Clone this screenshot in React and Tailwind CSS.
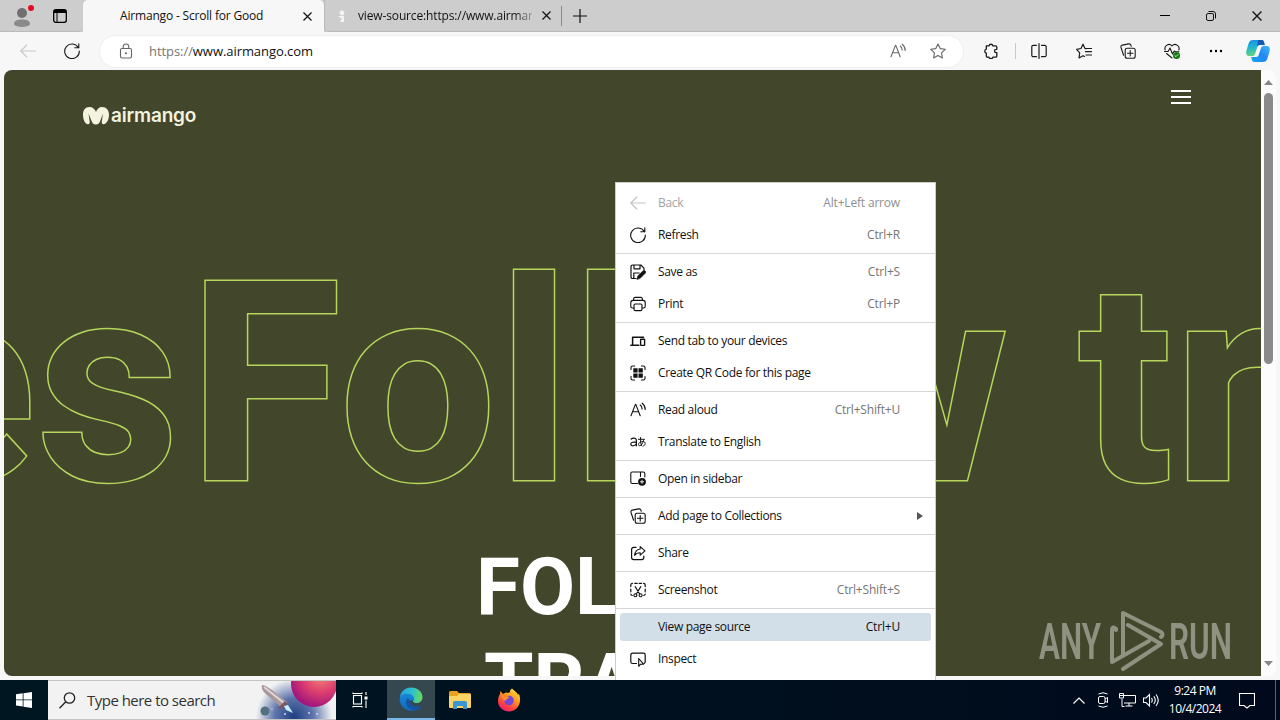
import React from 'react'
import clsx from 'clsx'

const Icon = ({ size = 16, box = '0 0 16 16', className, children }) => (
    <svg width={size} height={size} viewBox={box} fill="none" stroke="currentColor" strokeWidth="1.1" strokeLinecap="round" strokeLinejoin="round" className={clsx('shrink-0', className)}>
        {children}
    </svg>
)

const BackIcon = () => <Icon><path d="M15.5 8H.8M6.8 2 .8 8l6 6" /></Icon>

const RefreshIcon = ({ className }) => (
    <Icon className={className}><path d="M14.4 4.800A7.300 7.300 0 1 0 15.300 8M14.800.8v4h-4" /></Icon>
)

const SaveIcon = () => (
    <Icon>
        <path d="M6 14.5H2.6A1.6 1.6 0 0 1 1 12.9V2.6A1.6 1.6 0 0 1 2.6 1h8.2L14 4.2v2M4 1v3.8h6V1M3.8 14.4V9h5.4" strokeWidth="1.2" />
        <path d="m7 15.2.8-3.2 5-5a1.6 1.6 0 0 1 2.4 2.3l-5 5z" fill="currentColor" strokeWidth=".6" />
    </Icon>
)

const PrintIcon = () => (
    <Icon>
        <path d="M4 12H2.4A1.6 1.6 0 0 1 .8 10.4V6.6A2.2 2.2 0 0 1 3 4.4h10a2.2 2.2 0 0 1 2.2 2.2v3.8a1.6 1.6 0 0 1-1.6 1.6H12M3.6 4.400V3A1.600 1.600 0 0 1 5.200 1.400h5.600A1.600 1.600 0 0 1 12.400 3v1.400" />
        <rect x="4" y="8" width="8" height="6.6" rx="1.3" />
    </Icon>
)

const DevicesIcon = () => (
    <Icon>
        <path d="M2.600 11V4.200h11M.8 12.200h8" strokeWidth="1.500" />
        <rect x="10.600" y="6.200" width="4" height="6.200" rx=".6" strokeWidth="1.400" />
    </Icon>
)

const QrIcon = () => (
    <Icon>
        <path d="M1 4.500V2.600A1.600 1.600 0 0 1 2.600 1h2M11.400 1h2A1.600 1.600 0 0 1 15 2.600v2M15 11.500v1.900a1.600 1.600 0 0 1-1.600 1.600h-2M4.600 15h-2A1.600 1.600 0 0 1 1 13.400v-2" />
        <path d="M3.300 3.300h4.300v4.300H3.300zM8.500 3.300h4.300v4.300H8.500zM3.300 8.500h4.300v4.300H3.300zM8.500 8.500h4.300v4.300H8.500z" fill="currentColor" stroke="none" />
    </Icon>
)

const ReadAloudIcon = ({ className }) => (
    <Icon className={className}>
        <path d="m1 13.800 4.400-11.400h.4l4.400 11.400M2.700 9.800h5.800M10.200 3a5 5 0 0 1 1.900 4M12.200 1.200a7.600 7.600 0 0 1 3 6.300" />
    </Icon>
)

const TranslateIcon = () => (
    <Icon>
        <path d="M1.200 5c1.600-1.400 5.200-1.400 5.200 1.400v5.400M6.400 7.800C3.400 7.800.8 8.200.8 10.200c0 2.400 4.600 2 5.600-.6" strokeWidth="1.200" />
        <path d="M8.400 5.300h6.100M10.600 3.500c-.2 3 0 6 .9 8M13.500 6.500c-.8 3-2.200 5.200-3.900 5.200-2.200 0-1-4.200 3-4.200 3.600 0 3.400 4 .4 4.600" strokeWidth="1" />
    </Icon>
)

const SidebarIcon = () => (
    <Icon>
        <path d="M7.500 12.500H2.200A1.400 1.400 0 0 1 .8 11.100V2.400A1.400 1.400 0 0 1 2.200 1h11.200a1.400 1.400 0 0 1 1.400 1.400V6M10.500 1v4.500" />
        <circle cx="12" cy="10.800" r="3.900" fill="currentColor" stroke="none" />
        <path d="M12 9.200v3.200M10.400 10.800h3.200" stroke="#fff" strokeWidth=".9" />
    </Icon>
)

const CollectionsIcon = ({ className }) => (
    <Icon className={className}>
        <rect x="5.200" y="5.200" width="10" height="10" rx="2" />
        <path d="M10.200 7.500v5.400M7.500 10.200h5.400M3.600 12.200 1 4.500a2 2 0 0 1 1.300-2.400L8.700.9a2 2 0 0 1 2.300 1.400l.3 1" />
    </Icon>
)

const ShareIcon = () => (
    <Icon>
        <path d="M6 2.400H3.600a2 2 0 0 0-2 2v8.200a2 2 0 0 0 2 2h8.200a2 2 0 0 0 2-2V11" strokeWidth="1.200" />
        <path d="M10.200 1.600 15 5.900l-4.800 4.300V7.800c-2.400 0-4.200.6-5.600 2.600.4-3.400 2.200-6 5.600-6.400z" />
    </Icon>
)

const ScreenshotIcon = () => (
    <Icon>
        <path d="M2.200 13.500C1.300 13.300.8 12.800.8 12M.8 9.800V7M.8 4.600V3A1.600 1.600 0 0 1 2.400 1.400M4.800 1.400h2.400M9.200 1.400h2.300M13.600 1.400A1.600 1.600 0 0 1 15.200 3v1.600M15.200 7v2.800M15.200 12c0 .8-.5 1.300-1.400 1.500" strokeWidth="1.200" />
        <path d="m5.200 4.600 4.500 7.400M10.800 4.600 6.300 12" />
        <circle cx="5.400" cy="13.200" r="1.500" />
        <circle cx="10.600" cy="13.200" r="1.500" />
    </Icon>
)

const InspectIcon = () => (
    <Icon>
        <path d="M6.500 12.500H2.600A1.800 1.800 0 0 1 .8 10.700V4a1.800 1.800 0 0 1 1.800-1.800h10.800A1.800 1.800 0 0 1 15.200 4v6.700c0 .8-.5 1.500-1.200 1.700" strokeWidth="1.200" />
        <path d="M8.700 7.500v7.800l1.900-2.100h2.900z" />
    </Icon>
)

const menuGroups = [
    [
        { label: 'Back', keys: 'Alt+Left arrow', icon: BackIcon, disabled: true },
        { label: 'Refresh', keys: 'Ctrl+R', icon: RefreshIcon },
    ],
    [
        { label: 'Save as', keys: 'Ctrl+S', icon: SaveIcon },
        { label: 'Print', keys: 'Ctrl+P', icon: PrintIcon },
    ],
    [
        { label: 'Send tab to your devices', icon: DevicesIcon },
        { label: 'Create QR Code for this page', icon: QrIcon },
    ],
    [
        { label: 'Read aloud', keys: 'Ctrl+Shift+U', icon: ReadAloudIcon },
        { label: 'Translate to English', icon: TranslateIcon },
    ],
    [{ label: 'Open in sidebar', icon: SidebarIcon }],
    [{ label: 'Add page to Collections', icon: CollectionsIcon, submenu: true }],
    [{ label: 'Share', icon: ShareIcon }],
    [{ label: 'Screenshot', keys: 'Ctrl+Shift+S', icon: ScreenshotIcon }],
    [
        { label: 'View page source', keys: 'Ctrl+U', active: true },
        { label: 'Inspect', icon: InspectIcon },
    ],
]

const MenuItem = ({ label, keys, icon: Glyph, disabled, active, submenu }) => (
    <div className={clsx('mx-1 my-0.5 flex h-7 shrink-0 items-center rounded-[3px] pl-2.5 text-[12px]', active && 'bg-[#d3dfe8]', disabled ? 'text-[#a3a3a3]' : 'text-[#111]')}>
        <div className={clsx('mr-3 flex w-4 justify-center', disabled && 'text-[#c4c4c4]')}>{Glyph && <Glyph />}</div>
        <span className="tracking-[-0.33px]">{label}</span>
        {keys && <span className={clsx('ml-auto mr-[31px] tracking-[-0.18px]', disabled ? 'text-[#8f8f8f]' : active ? 'text-[#111]' : 'text-[#757575]')}>{keys}</span>}
        {submenu && <svg width="6" height="8" viewBox="0 0 6 8" className="ml-auto mr-2 fill-[#555]"><path d="M0 0 6 4 0 8z" /></svg>}
    </div>
)

const ContextMenu = () => (
    <div className="absolute left-[615px] top-[182px] flex h-[498px] w-[321px] flex-col overflow-hidden border border-b-0 border-[#ccc] bg-white pt-1">
        {menuGroups.map((group, i) => (
            <div key={i} className={clsx('flex shrink-0 flex-col', i > 0 && 'mt-0.5 border-t border-[#d6d6d6] pt-0.5')}>
                {group.map((item) => <MenuItem key={item.label} {...item} />)}
            </div>
        ))}
    </div>
)

const CloseIcon = ({ className }) => (
    <svg width="9" height="9" viewBox="0 0 9 9" stroke="#111" strokeWidth="1.200" className={className}><path d="m.5.5 8 8M8.500.5l-8 8" /></svg>
)

const TabStrip = () => (
    <div className="flex h-8 items-center bg-[#cdcdcd] text-[12px] text-[#111]">
        <div className="flex h-8 w-[83px] items-center rounded-br-[5px] border-b border-[#bbb]">
            <svg width="26" height="26" viewBox="0 0 26 26" className="ml-[11px]">
                <circle cx="11" cy="10" r="5" fill="#707070" />
                <path d="M3 21.500C3 17 7 16.500 11 16.500s8 .5 8 5c-2 3.200-14 3.200-16 0z" fill="#8a8a8a" />
                <circle cx="20" cy="5" r="3" fill="#e00b1c" />
            </svg>
            <svg width="14" height="14" viewBox="0 0 14 14" fill="none" stroke="#000" className="ml-4">
                <rect x=".7" y=".7" width="12.600" height="12.600" rx="2" strokeWidth="1.300" />
                <path d="M1 2.500h12" strokeWidth="3" />
                <path d="M4 3v10" />
            </svg>
        </div>
        <div className="flex h-8 w-[241px] items-center rounded-t-[5px] bg-[#f7f7f7]">
            <span className="ml-[37px] whitespace-nowrap tracking-[-0.18px]">Airmango - Scroll for Good</span>
            <CloseIcon className="ml-auto mr-3" />
        </div>
        <div className="flex h-8 flex-1 items-center rounded-bl-[5px] border-b border-l border-[#b9b9b9]">
            <svg width="8" height="12" viewBox="0 0 8 12" fill="#f4f4f4" className="ml-3"><circle cx="5" cy="3" r="2.400" /><path d="M1 6h6v4a2 2 0 0 1-4 1L5 9z" /></svg>
            <div className="ml-[13px] w-[174px] whitespace-nowrap bg-gradient-to-r from-[#111] from-90% to-[#11111144] bg-clip-text tracking-[-0.14px] text-transparent">view-source:https://www.airman</div>
            <CloseIcon className="ml-[10px]" />
            <div className="ml-[10px] h-5 w-px bg-[#888]" />
            <svg width="14" height="14" viewBox="0 0 14 14" stroke="#111" strokeWidth="1.200" className="ml-[11px]"><path d="M7 0v14M0 7h14" /></svg>
            <div className="ml-auto flex items-center pr-[18px]">
                <div className="h-px w-[10px] bg-black" />
                <svg width="10" height="10" viewBox="0 0 10 10" fill="none" stroke="#111" className="ml-[36px]"><rect x=".5" y="2.500" width="7" height="7" rx="1.500" /><path d="M2.500.5H7a2.500 2.500 0 0 1 2.500 2.500v4.500" /></svg>
                <CloseIcon className="ml-[36px] h-[10px] w-[10px]" />
            </div>
        </div>
    </div>
)

const Toolbar = () => (
    <div className="flex h-[38px] items-center bg-[#f7f7f7] text-[#1b1b1b]">
        <div className="ml-5 text-[#c9c9c9]"><BackIcon /></div>
        <RefreshIcon className="ml-7" />
        <div className="ml-5 flex h-[31px] w-[863px] items-center rounded-full bg-white text-[#666] shadow-[0_0_2px_#ddd]">
            <Icon className="ml-[18px]">
                <path d="M5.200 5.500V3.800a2.800 2.800 0 0 1 5.600 0v1.700" />
                <rect x="2.500" y="5.500" width="11" height="9.500" rx="1.500" />
                <circle cx="8" cy="10.200" r=".5" fill="currentColor" />
            </Icon>
            <span className="ml-[15px] pt-px text-[13px] tracking-[-0.06px] text-[#767676]">https://<span className="text-[#111]">www.airmango.com</span></span>
            <div className="ml-auto mr-[17px] flex gap-6">
                <ReadAloudIcon />
                <Icon><path d="m8 .9 2.200 4.700 5 .7-3.700 3.600.9 5.100L8 12.600 3.600 15l.9-5.100L.8 6.300l5-.7z" /></Icon>
            </div>
        </div>
        <Icon className="ml-5">
            <path d="M3.300 2.800h2.700a2 2 0 0 1 3.900 0h2.700a1.200 1.200 0 0 1 1.200 1.200v2.300h-.6a1.700 1.700 0 0 0 0 3.400h.6V13a1.200 1.200 0 0 1-1.200 1.200H9.900a2 2 0 0 1-3.900 0H4.500A1.200 1.200 0 0 1 3.300 13v-2.900a2 2 0 0 1 0-3.900z" strokeWidth="1.300" />
        </Icon>
        <div className="ml-4 h-4 w-px bg-[#c8c8c8]" />
        <Icon className="ml-[15px]"><path d="M5.500 2.300H2.300A1.500 1.500 0 0 0 .8 3.800v8.400a1.500 1.500 0 0 0 1.500 1.500h3.200M10.500 2.300h3.200a1.500 1.500 0 0 1 1.500 1.500v8.400a1.500 1.500 0 0 1-1.500 1.500h-3.200M8 .6v14.800" strokeWidth="1.200" /></Icon>
        <Icon className="ml-[29px]"><path d="M10.500 5.600H9L7 1.200 5 5.500l-4.400.8L3.700 9.800 3 15l4-2.300 1.500.8M10 5.500h5.500M9.500 8.700h6M10 12h5.500" strokeWidth="1.200" /></Icon>
        <CollectionsIcon className="ml-7" />
        <Icon className="ml-7">
            <path d="M1.200 7A4 4 0 0 1 8 3a4 4 0 0 1 6.800 4M.5 8.500H4L6 5l2.500 6 1.700-3 1 .7H15M2.500 10.500 8 15" />
            <circle cx="12.500" cy="12.500" r="3.500" fill="#107c10" stroke="none" />
            <path d="m11 12.700 1 .9 2-2" stroke="#fff" strokeWidth=".8" />
        </Icon>
        <svg width="14" height="4" viewBox="0 0 14 4" className="ml-[29px] fill-black"><circle cx="2" cy="2" r="1.200" /><circle cx="7" cy="2" r="1.200" /><circle cx="12" cy="2" r="1.200" /></svg>
        <svg width="24" height="24" viewBox="0 0 24 24" className="ml-[23px] shrink-0">
            <defs>
                <linearGradient id="cpA" x1="0" y1="0" x2="0.2" y2="1"><stop stopColor="#188be8" /><stop offset=".5" stopColor="#20b5d0" /><stop offset="1" stopColor="#63d47d" /></linearGradient>
                <linearGradient id="cpB" x1="1" y1="0" x2="0" y2="1"><stop stopColor="#40b8fa" /><stop offset=".5" stopColor="#2386f5" /><stop offset="1" stopColor="#14a6e6" /></linearGradient>
            </defs>
            <path d="M7 1h8c3 0 3 2 3.800 5H14c-2 0-2.500 1-3 3l-2 6c-.5 1.500-1.500 2-3 2H3c-3 0-3.300-3-2.400-6l2-6.500C3.400 2 4.500 1 7 1z" fill="url(#cpA)" />
            <path d="M12 1h3c3 0 3 2 3.800 5H14c-1.500 0-2.300.6-2.800 2z" fill="#1459b8" />
            <path d="M17 23H9c-3 0-3-2-3.800-5H10c2 0 2.500-1 3-3l2-6c.5-1.500 1.500-2 3-2h3c3 0 3.300 3 2.400 6l-2 6.500C20.600 22 19.500 23 17 23z" fill="url(#cpB)" />
        </svg>
    </div>
)

const Watermark = () => (
    <svg width="194" height="64" viewBox="0 0 194 64" className="absolute left-[1038px] top-[609px] opacity-55" fill="#d0d0c8">
        <text x="1" y="50" fontFamily="Roboto" fontSize="50" fontWeight="600" textLength="62" lengthAdjust="spacingAndGlyphs">ANY</text>
        <text x="131" y="50" fontFamily="Roboto" fontSize="50" fontWeight="600" textLength="63" lengthAdjust="spacingAndGlyphs">RUN</text>
        <path d="M78 20q-5-1-4-8V9M85 48V4l39 20q2 2-1 4M88 16l34 18-48 27V24q0-4 4-4M85 60l39-24" fill="none" stroke="none" />
        <g fill="none" stroke="#d0d0c8" strokeWidth="4" strokeLinejoin="round" strokeLinecap="round">
            <path d="M78 21v-1q-4-4-4 2M85 45V4l38 19q3 3 0 5M90 16l33 19-38 25M78 20q-4-2-4 3v30l37-21" />
        </g>
    </svg>
)

const WebPage = () => (
    <div className="flex h-[606px] w-[1257px] flex-col overflow-hidden rounded-l-[8px] bg-[#42472c]">
        <header className="flex h-[164px] shrink-0 items-start justify-between pl-[79px] pr-[70px]">
            <div className="mt-[34px] flex items-center text-[#f4f3df]">
                <svg width="26" height="18" viewBox="0 0 26 18" fill="currentColor">
                    <path d="M6.500 0C2 0 0 3.500 0 7.500 0 12 1.500 16 4 17c2 .8 3-.5 2.700-2.500L5.500 6.500 9 15c1 2.300 2.300 2.500 4.200 2.500 2 0 3-1 3.800-3L20 6.500l-1.200 8c-.3 2 .7 3.300 2.700 2.500 2.800-1 4.500-5 4.500-9.500C26 3.500 23.500 0 19 0c-3 0-5 2-6 5-1-3-3.500-5-6.500-5z" />
                </svg>
                <span className="ml-[2px] font-['Inter'] text-[19px] font-semibold leading-6 tracking-[-0.2px]">airmango</span>
            </div>
            <div className="mt-5 flex w-5 flex-col gap-1">
                <div className="h-0.5 bg-white" />
                <div className="h-0.5 bg-white" />
                <div className="h-0.5 bg-white" />
            </div>
        </header>
        {/* the fill is painted over the stroke so the glyph contours stay clean where they overlap */}
        <div className="-ml-[119px] flex h-[300px] shrink-0 whitespace-pre font-['Roboto'] text-[280px] font-bold leading-[300px] text-[#42472c] [-webkit-text-stroke:3px_#b5d65b] [paint-order:stroke_fill]">
            <span>es</span>
            <span className="ml-[8px]">Follow tr</span>
        </div>
        <h1 className="shrink-0 pl-[472px] pt-[5px] font-['Roboto'] text-[80px] font-bold leading-[96px] text-white">
            <div>FOLLOW</div>
            <div className="pl-[8px]">TRAVELS</div>
        </h1>
    </div>
)

const Scrollbar = () => (
    <div className="flex h-[606px] w-[15px] flex-col items-center rounded-r-[8px] bg-[#fcfcfc] py-[10px]">
        <svg width="9" height="5" viewBox="0 0 9 5" fill="#858585"><path d="M4.500 0 9 5H0z" /></svg>
        <div className="mt-2 h-[271px] w-[9px] rounded-full bg-[#8a8a8a]" />
        <svg width="9" height="5" viewBox="0 0 9 5" fill="#858585" className="mt-auto"><path d="M4.500 5 9 0H0z" /></svg>
    </div>
)

const SearchArt = () => (
    <svg width="80" height="38" viewBox="-4 0 80 38">
        <defs>
            <radialGradient id="haze" gradientUnits="userSpaceOnUse" cx="34" cy="36" r="38"><stop stopColor="#1f3f82" /><stop offset=".5" stopColor="#5d74aa" /><stop offset="1" stopColor="#f2f2f2" /></radialGradient>
            <radialGradient id="planet" cx=".65" cy=".3" r=".7"><stop stopColor="#f58a78" /><stop offset=".55" stopColor="#dd3f6e" /><stop offset="1" stopColor="#a3187c" /></radialGradient>
        </defs>
        <rect x="-4" width="80" height="38" fill="url(#haze)" />
        <circle cx="54" cy="3" r="23" fill="url(#planet)" />
        <path d="M2 4c3 0 7 3 10 5l15 12-5 6L7 14C3 11 1 7 2 4z" fill="#a8979c" />
        <path d="m4 6 20 16" stroke="#e2d5d6" strokeWidth="2" />
        <path d="m18 27 7-7 2 3-5 5z" fill="#7b5560" />
        <path d="m24 25 4-1 5 8-7-3z" fill="#c6eefc" />
        <circle cx="5" cy="30" r="4.500" fill="#53707f" />
        <g fill="#c8d6f2"><circle cx="12" cy="28" r=".8" /><circle cx="25" cy="33" r="1" /><circle cx="49" cy="32" r="1" /><circle cx="57" cy="33" r="1" /></g>
    </svg>
)

const EdgeLogo = () => (
    <svg width="24" height="24" viewBox="0 0 24 24">
        <defs>
            <linearGradient id="edgeTop" x1="0" y1=".4" x2="1" y2=".5"><stop stopColor="#229fe0" /><stop offset=".55" stopColor="#31c3c9" /><stop offset="1" stopColor="#6bd957" /></linearGradient>
            <linearGradient id="edgeLow" x1="0" y1="0" x2="0" y2="1"><stop stopColor="#1688d8" /><stop offset="1" stopColor="#1268bd" /></linearGradient>
        </defs>
        <path d="M1 11C1 5 6 .5 12 .5c7 0 11.500 4.500 11.500 9.500 0 4-3 6-6 6-2.500 0-4.300-.9-3.300-2.200C16 11 13 7 9 7c-4 0-7 2-8 4z" fill="url(#edgeTop)" />
        <path d="M.7 12C1 8.500 4.500 6.700 8.500 6.700c4 0 6.500 2.800 6.500 5.300 0 1-.5 1.500-.8 2-2-2-5.200 0-4.700 3.500.5 3 4 5.500 7 5.700C8 25.500.5 20 .7 12z" fill="url(#edgeLow)" />
        <path d="M9 11c-4 3-2 10.500 5 12.200 4 .3 7.500-2 9-5-5 3-12.500.5-12-4.500z" fill="#1454a5" />
    </svg>
)

const FolderLogo = () => (
    <svg width="22" height="20" viewBox="0 0 22 20">
        <path d="M0 2.500A1.500 1.500 0 0 1 1.500 1H8l2 2h10.500A1.500 1.500 0 0 1 22 4.500V8H0z" fill="#e8a220" />
        <path d="M0 6h8l2-2h12v13a1 1 0 0 1-1 1H1a1 1 0 0 1-1-1z" fill="#fbd468" />
        <path d="M4 19v-6.500A1.500 1.500 0 0 1 5.500 11h11a1.500 1.500 0 0 1 1.500 1.500V19h-4v-3H8v3z" fill="#3e94d1" />
    </svg>
)

const FirefoxLogo = () => (
    <svg width="24" height="24" viewBox="0 0 24 24">
        <defs>
            <linearGradient id="fox" x1=".8" y1="0" x2=".2" y2="1"><stop stopColor="#ffe13c" /><stop offset=".4" stopColor="#ff9620" /><stop offset=".75" stopColor="#fb3c42" /><stop offset="1" stopColor="#e51a82" /></linearGradient>
        </defs>
        <path d="M15 .5c2 2 5 3.500 6 6.500l.8-1.500c1.300 3 1.400 5.500 1.200 7.500-.6 6-5.200 10.500-11 10.500S1 19 1 13C1 9.500 2 7.500 3 6l.3-3L6 6l3-1.500C11 5 13 5 13 3.500 13 2 14 1.500 15 .5z" fill="url(#fox)" />
        <circle cx="12" cy="12.500" r="4.800" fill="#7546d5" />
        <path d="M5 8c3-2 5 0 7.500 1.300C11 11 9 10.500 9 13c-2-.5-4-2-4-5z" fill="#ff8b2c" />
    </svg>
)

const Taskbar = () => (
    <div className="flex h-10 items-center bg-gradient-to-r from-[#001722] to-[#000a1c] text-white">
        <div className="flex w-12 justify-center">
            <svg width="16" height="16" viewBox="0 0 16 16" fill="#fff"><path d="M0 2.300 6.700 1.300v6.200H0zM7.500 1.200 16 0v7.500H7.500zM0 8.300h6.700v6.200L0 13.600zM7.500 8.300H16V16l-8.500-1.200z" /></svg>
        </div>
        <div className="flex h-10 w-[288px] items-center border-y border-[#c4c4c4] bg-[#f2f2f2] text-[#333]">
            <svg width="17" height="17" viewBox="0 0 17 17" fill="none" stroke="#222" strokeWidth="1.300" className="ml-[11px]"><circle cx="10.500" cy="6" r="5.200" /><path d="m6.800 9.700-6.300 6.600" /></svg>
            <span className="ml-[11px] whitespace-nowrap text-[15px] tracking-[-0.52px]">Type here to search</span>
            <div className="ml-auto"><SearchArt /></div>
        </div>
        <div className="flex w-[51px] justify-center pr-1">
            <svg width="18" height="16" viewBox="0 0 18 16" fill="none" stroke="#fff" strokeWidth="1.100"><rect x="2.500" y="3.500" width="8" height="8.500" /><path d="M2 .5v1h9v-1M2 15.500V14.500h9v1M15 0v3M15 8.500V16" /><path d="M13.500 4.500h3v3h-3z" fill="#fff" stroke="none" /></svg>
        </div>
        <div className="flex h-10 w-12 items-center justify-center border-b-2 border-[#79b7ea] bg-[#35474f]"><EdgeLogo /></div>
        <div className="flex w-[50px] justify-center"><FolderLogo /></div>
        <div className="flex w-12 justify-center"><FirefoxLogo /></div>
        <div className="ml-auto flex h-10 items-center">
            <svg width="12" height="7" viewBox="0 0 12 7" fill="none" stroke="#fff" strokeWidth="1.200"><path d="m.5 6.500 5.500-5.500 5.500 5.500" /></svg>
            <svg width="14" height="16" viewBox="0 0 14 16" fill="none" stroke="#fff" className="ml-[11px]"><rect x="2.500" y="4.500" width="6.500" height="7" rx="1.500" /><path d="m9 7 2.500-1.500v5L9 9M2.500 2Q7-.5 11.500 2M2.500 14q4.500 2.500 9 0" /></svg>
            <svg width="17" height="16" viewBox="0 0 17 16" fill="none" stroke="#fff" className="ml-[9px]"><path d="M5 3.500h11.500V11H5M10 11v3M6.500 14h7M3 7v7.500h2.500M.5 1.500h4V6h-4zM1 3.500h3" /></svg>
            <svg width="17" height="16" viewBox="0 0 17 16" fill="none" stroke="#fff" strokeWidth="1.100" className="ml-[7px]"><path d="M.5 6v4.500H3l3.500 3.500V2.500L3 6zM8.500 6q1.500 2.200 0 4.500M10.800 4.300q3 4 0 7.700M13 2.500q4.500 5.800 0 11.500" /></svg>
            <div className="ml-[8px] flex w-[54px] flex-col items-center whitespace-nowrap text-[12px] leading-[18px] tracking-[-0.5px]">
                <span>9:24 PM</span>
                <span>10/4/2024</span>
            </div>
            <svg width="16" height="17" viewBox="0 0 16 17" fill="none" stroke="#fff" strokeWidth="1.100" className="ml-[17px]"><path d="M.5 1.500h15v12H11l-3 2.500-3-2.500H.5z" /></svg>
            <div className="ml-5 h-10 w-px bg-[#59636b]" />
            <div className="w-1" />
        </div>
    </div>
)

const App = () => (
    <div className="relative h-[720px] w-[1280px] overflow-hidden bg-[#f7f7f7] font-['Open_Sans','Noto_Sans',sans-serif]">
        <TabStrip />
        <Toolbar />
        <div className="flex h-[610px] pl-1">
            <WebPage />
            <Scrollbar />
        </div>
        <Taskbar />
        <Watermark />
        <ContextMenu />
    </div>
)

export default App
